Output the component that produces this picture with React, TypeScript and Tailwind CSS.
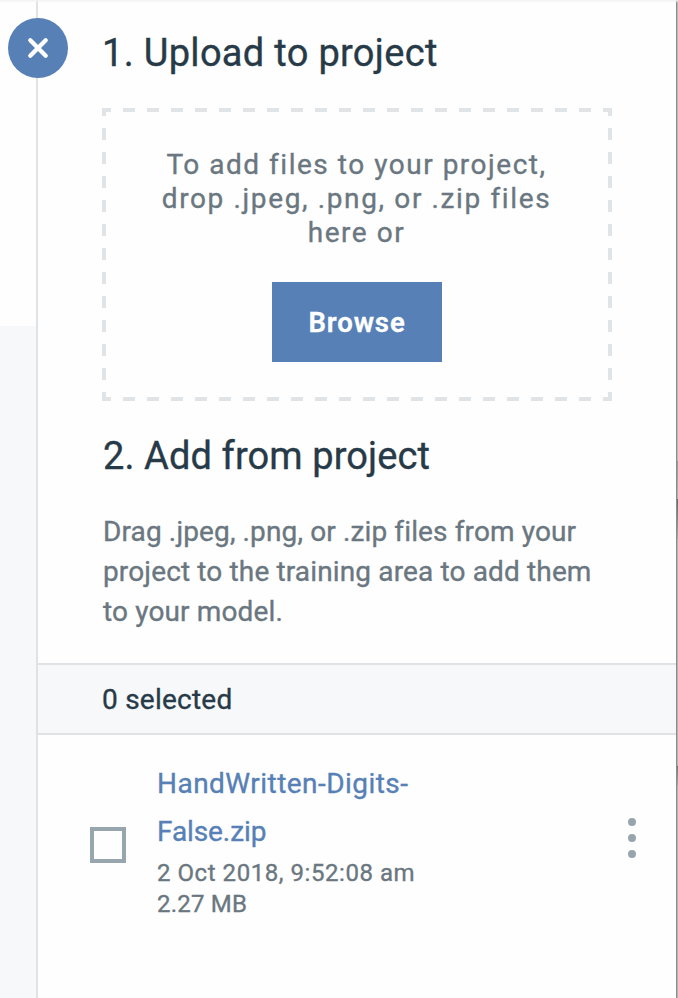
function DashedFrame() {
  return (
    <svg className="pointer-events-none absolute inset-0" width="510" height="293" fill="none" stroke="#e0e4e7" strokeWidth="4">
      <path d="M0 2H9M0 291H9M501 2H510M501 291H510" />
      <path d="M21 2H501M21 291H501" strokeDasharray="12 12" />
      <path d="M2 0V8M508 0V8M2 284V293M508 284V293" />
      <path d="M2 20V284M508 20V284" strokeDasharray="12 12" />
    </svg>
  );
}

function CloseButton() {
  return (
    <button aria-label="Close" className="absolute top-[18px] left-2 size-[60px] rounded-full bg-[#5680b6]">
      <svg width="60" height="60" viewBox="0 0 60 60" stroke="#fff" strokeWidth="4.3" strokeLinecap="round">
        <path d="M22.3 22.3L37.7 37.7M37.7 22.3L22.3 37.7" />
      </svg>
    </button>
  );
}

export default function App() {
  return (
    <div className="relative flex h-[998px] w-[678px] overflow-hidden bg-[#fefefe] font-['Roboto',sans-serif] text-[28px] text-[#6a7780] [-webkit-text-stroke:0.35px]">
      <aside className="w-9 shrink-0 pt-[326px]">
        <div className="h-full bg-[#f6f8fa]" />
      </aside>
      <main className="flex min-w-0 flex-1 flex-col border-l-2 border-[#e0e3e6] pt-[33px]">
        <h2 className="ml-16 text-[38px] leading-10 tracking-[0.31px] text-[#273a48]">1. Upload to project</h2>
        <section className="relative mt-[35px] ml-16 flex h-[293px] w-[510px] flex-col items-center pt-10">
          <DashedFrame />
          <div className="text-center leading-[34px] whitespace-nowrap">
            <p className="-ml-px tracking-[1.52px]">To add files to your project,</p>
            <p className="-ml-px tracking-[1.63px]">drop .jpeg, .png, or .zip files</p>
            <p className="-ml-px tracking-[1.55px]">here or</p>
          </div>
          <button className="mt-8 h-20 w-[170px] bg-[#5680b6] pt-0.5 text-[27.5px] font-semibold tracking-[0.9px] text-white">
            Browse
          </button>
        </section>
        <h2 className="mt-[35px] ml-[65px] text-[38px] leading-10 tracking-[0.1px] text-[#273a48]">2. Add from project</h2>
        <div className="mt-9 ml-[65px] leading-10 whitespace-nowrap">
          <p className="tracking-[0.13px]">Drag .jpeg, .png, or .zip files from your</p>
          <p className="tracking-[0.14px]">project to the training area to add them</p>
          <p className="tracking-[0.14px]">to your model.</p>
        </div>
        <div className="mt-[31px] flex h-[72px] items-center border-y-2 border-[#e0e3e6] bg-[#f6f8fa] pt-0.5 pl-16 tracking-[0.24px] text-[#273a48]">
          0 selected
        </div>
        <div className="flex pt-[25px] pl-[52px]">
          <div className="mt-[67px] size-9 shrink-0 border-4 border-[#97a6ad]" />
          <div className="ml-[31px] flex-1 whitespace-nowrap">
            <div className="leading-[48px] text-[#5680b6]">
              <p className="tracking-[0.46px]">HandWritten-Digits-</p>
              <p className="-tracking-[0.1px]">False.zip</p>
            </div>
            <div className="mt-0.5 text-[24px] leading-[31px]">
              <p className="tracking-[0.55px]">2 Oct 2018, 9:52:08 am</p>
              <p className="tracking-[0.2px]">2.27 MB</p>
            </div>
          </div>
          <div className="mt-[58px] mr-10 flex flex-col gap-2">
            <span className="size-2 rounded-full bg-[#97a6ad]" />
            <span className="size-2 rounded-full bg-[#97a6ad]" />
            <span className="size-2 rounded-full bg-[#97a6ad]" />
          </div>
        </div>
      </main>
      <div className="flex w-0.5 shrink-0 flex-col border-l border-[#8c8c8c]">
        <div className="h-[461px] bg-[#b8b8b8]" />
        <div className="h-[38px] bg-linear-to-b from-[#999] to-[#b0b0b0]" />
        <div className="h-10 bg-linear-to-b from-[#666] to-[#a8a8a8]" />
        <div className="h-[227px] bg-[#b3b3b3]" />
        <div className="h-5 bg-linear-to-b from-[#777] to-[#a8a8a8]" />
        <div className="flex-1 bg-[#b3b3b3]" />
      </div>
      <div className="absolute inset-x-0 top-0 h-[3px] bg-linear-to-b from-[#f2f2f2] to-transparent" />
      <CloseButton />
    </div>
  );
}
